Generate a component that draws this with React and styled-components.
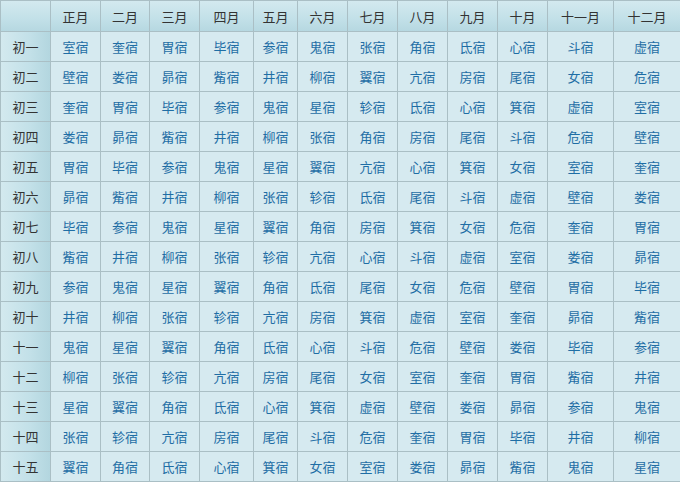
import React from 'react';
import styled, {createGlobalStyle} from 'styled-components';

const Global = createGlobalStyle`
    body {
        margin: 0;
        background: #ffffff;
        font-family: "Noto Sans CJK SC", "Noto Sans", sans-serif;
    }
`;

const Table = styled.div`
    display: grid;
    grid-template-columns: 49px 49px 48px 49px 53px 43px 49px 49px 49px 49px 49px 65px 66px;
    grid-template-rows: 30px repeat(15, 29px);
    gap: 1px;
    padding: 1px 0 1px 1px;
    width: 680px;
    background: #aabfc5;
    box-sizing: border-box;
`;

const Cell = styled.div`
    display: flex;
    align-items: center;
    justify-content: center;
    font-size: 13px;
    color: #1f6ea5;
    background: #d6eaf0;
`;

const HeadCell = styled(Cell)`
    color: #333333;
    background: linear-gradient(to bottom, #d3e9ef 0%, #c2e0e8 60%, #b6d8e1 100%);
`;

const RowHead = styled(Cell)`
    color: #333333;
    background: linear-gradient(to right, #d3e9ef 0%, #c2e0e8 60%, #b3d6df 100%);
`;

const months = ['正月', '二月', '三月', '四月', '五月', '六月', '七月', '八月', '九月', '十月', '十一月', '十二月'];
const days = ['初一', '初二', '初三', '初四', '初五', '初六', '初七', '初八', '初九', '初十', '十一', '十二', '十三', '十四', '十五'];

// 27 mansions, 牛 left out
const xiu = '角亢氐房心尾箕斗女虚危室壁奎娄胃昴毕觜参井鬼柳星张翼轸';
const starts = '室奎胃毕参鬼张角氐心斗虚';

function mansion(month, day) {
    const i = xiu.indexOf(starts[month]);
    return xiu[(i + day) % xiu.length] + '宿';
}

export default function App() {
    return (
        <>
            <Global />
            <Table>
                <HeadCell />
                {months.map(m => <HeadCell key={m}>{m}</HeadCell>)}
                {days.map((d, di) => (
                    <React.Fragment key={d}>
                        <RowHead>{d}</RowHead>
                        {months.map((m, mi) => <Cell key={m}>{mansion(mi, di)}</Cell>)}
                    </React.Fragment>
                ))}
            </Table>
        </>
    );
}
